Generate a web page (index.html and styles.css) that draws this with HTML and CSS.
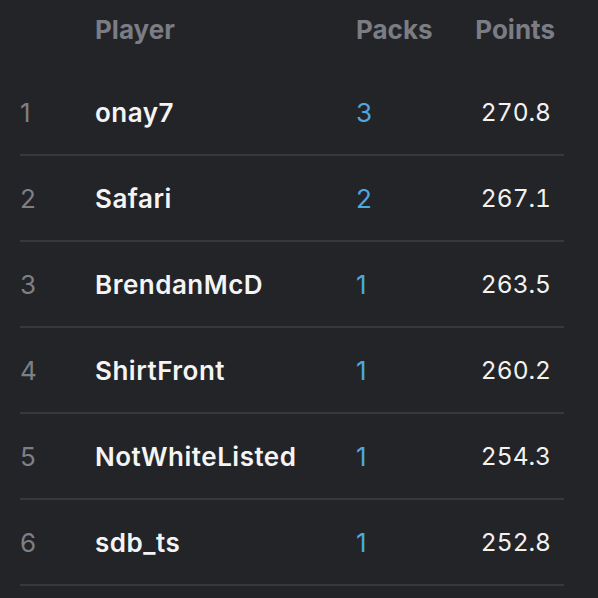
FILE: index.html
```html
<!doctype html>
<html lang="en">
  <head>
    <meta charset="UTF-8" />
    <meta name="viewport" content="width=device-width, initial-scale=1.0" />
    <title>Leaderboard</title>
    <link rel="stylesheet" href="styles.css">
  </head>
  <body>
    <div class="board">
      <div class="board-head">
        <div class="rank"></div>
        <div class="player">Player</div>
        <div class="packs">Packs</div>
        <div class="points">Points</div>
      </div>
      <div class="board-row">
        <div class="rank">1</div>
        <div class="player">onay7</div>
        <div class="packs">3</div>
        <div class="points">270.8</div>
      </div>
      <div class="board-row">
        <div class="rank">2</div>
        <div class="player">Safari</div>
        <div class="packs">2</div>
        <div class="points">267.1</div>
      </div>
      <div class="board-row">
        <div class="rank">3</div>
        <div class="player">BrendanMcD</div>
        <div class="packs">1</div>
        <div class="points">263.5</div>
      </div>
      <div class="board-row">
        <div class="rank">4</div>
        <div class="player">ShirtFront</div>
        <div class="packs">1</div>
        <div class="points">260.2</div>
      </div>
      <div class="board-row">
        <div class="rank">5</div>
        <div class="player">NotWhiteListed</div>
        <div class="packs">1</div>
        <div class="points">254.3</div>
      </div>
      <div class="board-row">
        <div class="rank">6</div>
        <div class="player">sdb_ts</div>
        <div class="packs">1</div>
        <div class="points">252.8</div>
      </div>
    </div>
  </body>
</html>
```

FILE: styles.css
```css
html,
body {
  margin: 0;
}
body {
  background: #232428;
  font-family: Inter, "Noto Sans", sans-serif;
  color: #f2f2f2;
}
.board {
  margin-left: 20px;
  width: 544px;
}
.board-head,
.board-row {
  display: grid;
  grid-template-columns: 75px 261px 1fr 120px;
  align-items: center;
}
.board-head {
  height: 70px;
  align-items: start;
  font-size: 26px;
  font-weight: 700;
  color: #7b7c84;
  line-height: 60px;
}
.board-head .points {
  padding-right: 9px;
}
.board-row {
  height: 86px;
  border-bottom: 2px solid #37383c;
  box-sizing: border-box;
  font-size: 26px;
}
.rank {
  color: #7e7f86;
  font-weight: 400;
}
.board-row .player {
  font-weight: 600;
  color: #f4f4f4;
  letter-spacing: 0.5px;
}
.board-row .packs {
  color: #4ba8e0;
}
.points {
  text-align: right;
  padding-right: 13px;
}
.board-row .points {
  font-size: 24.5px;
  font-variant-numeric: tabular-nums;
}
```
